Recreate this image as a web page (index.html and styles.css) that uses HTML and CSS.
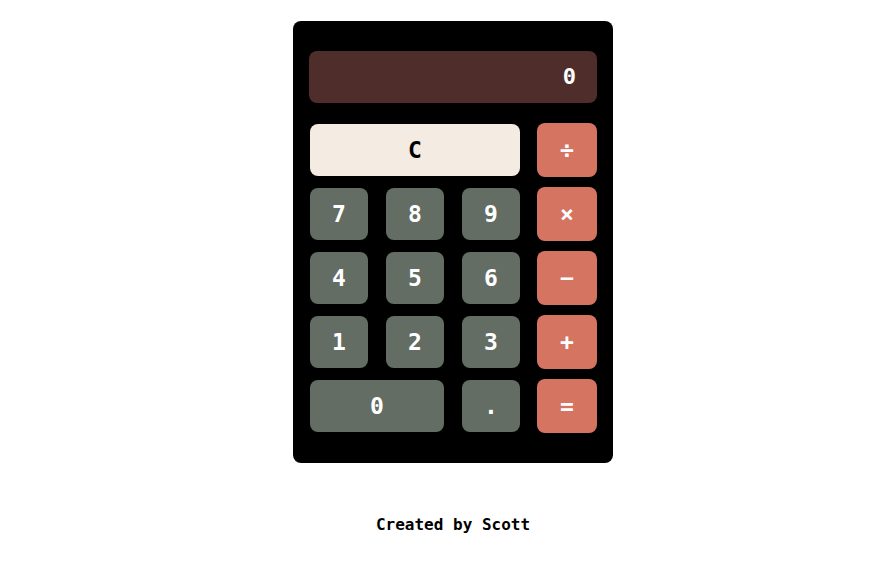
FILE: index.html
```html
<!DOCTYPE html>
<html>
<head>
<meta charset="utf-8">
<link rel="stylesheet" href="styles.css">
</head>
<body>
<div class="page">
  <div class="calc">
    <div class="display">0</div>
    <div class="keys">
      <button class="key clear">C</button>
      <button class="key op">÷</button>
      <button class="key num">7</button>
      <button class="key num">8</button>
      <button class="key num">9</button>
      <button class="key op">×</button>
      <button class="key num">4</button>
      <button class="key num">5</button>
      <button class="key num">6</button>
      <button class="key op">−</button>
      <button class="key num">1</button>
      <button class="key num">2</button>
      <button class="key num">3</button>
      <button class="key op">+</button>
      <button class="key num zero">0</button>
      <button class="key num">.</button>
      <button class="key op">=</button>
    </div>
  </div>
  <p class="credit">Created by Scott</p>
</div>
</body>
</html>
```
FILE: styles.css
```css
html, body {
  margin: 0;
  padding: 0;
  background: #fff;
}
body {
  font-family: "DejaVu Sans Mono", "Liberation Mono", monospace;
}
.page {
  padding: 21px 0 0 16px;
  display: flex;
  flex-direction: column;
  align-items: center;
}
.calc {
  width: 288px;
  background: #000;
  border-radius: 8px;
  padding: 30px 16px 31px;
}
.display {
  height: 52px;
  background: #4e2d2a;
  border-radius: 8px;
  color: #fff;
  font-weight: bold;
  font-size: 22px;
  line-height: 52px;
  text-align: right;
  padding-right: 21px;
  box-sizing: border-box;
}
.keys {
  margin-top: 21px;
  padding: 0 1px;
  display: grid;
  grid-template-columns: repeat(4, 58px);
  grid-auto-rows: 52px;
  column-gap: 18px;
  row-gap: 12px;
}
.key {
  border: none;
  border-radius: 8px;
  font-family: inherit;
  font-weight: bold;
  font-size: 23px;
  color: #fff;
  padding: 0;
  margin: 0;
  display: flex;
  align-items: center;
  justify-content: center;
}
.num {
  background: #646d64;
}
.op {
  background: #d67462;
  margin: -1px;
}
.clear {
  grid-column: span 3;
  background: #f4ebe2;
  color: #000;
}
.zero {
  grid-column: span 2;
}
.credit {
  margin: 52px 0 0;
  font-weight: bold;
  font-size: 16px;
  color: #000;
}
```
